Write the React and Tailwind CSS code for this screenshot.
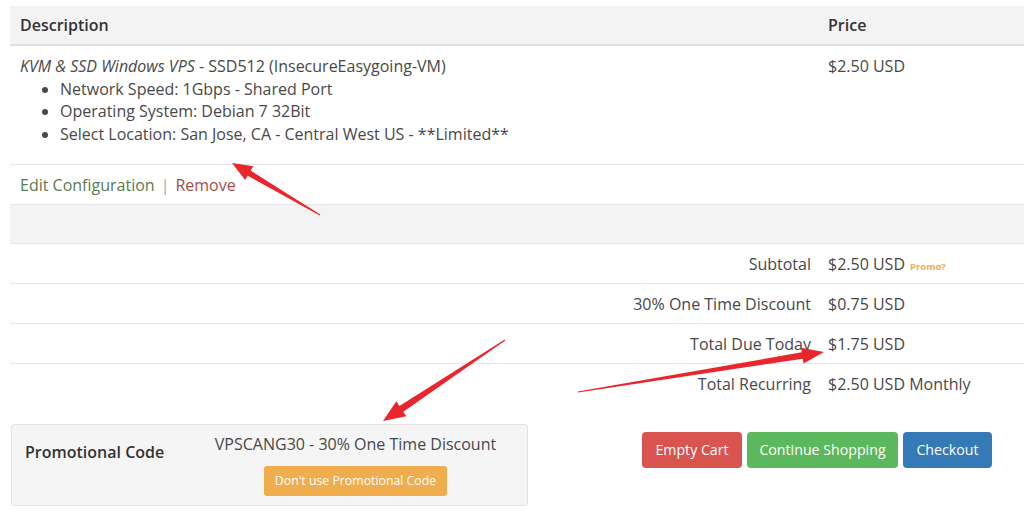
import React from 'react';

const font = { fontFamily: '"Open Sans", "Liberation Sans", sans-serif' };

// arrow polygon: thin tail, thicker near the head, triangular head
function arrowPoints(tail, tip, headLen = 20, headW = 8, shaftW = 3.2) {
  const dx = tip[0] - tail[0];
  const dy = tip[1] - tail[1];
  const len = Math.hypot(dx, dy);
  const ux = dx / len, uy = dy / len;
  const nx = -uy, ny = ux;
  const bx = tip[0] - ux * headLen, by = tip[1] - uy * headLen;
  const pts = [
    [tail[0] + nx * 0.5, tail[1] + ny * 0.5],
    [bx + nx * shaftW, by + ny * shaftW],
    [bx + nx * headW, by + ny * headW],
    tip,
    [bx - nx * headW, by - ny * headW],
    [bx - nx * shaftW, by - ny * shaftW],
    [tail[0] - nx * 0.5, tail[1] - ny * 0.5],
  ];
  return pts.map(p => p.join(',')).join(' ');
}

const totals = [
  { label: 'Subtotal', value: '$2.50 USD', promo: true },
  { label: '30% One Time Discount', value: '$0.75 USD' },
  { label: 'Total Due Today', value: '$1.75 USD' },
  { label: 'Total Recurring', value: '$2.50 USD Monthly' },
];

export default function App() {
  return (
    <div className="relative w-[1024px] h-[520px] overflow-hidden bg-white pt-[6px] pl-[10px] text-[#484848]" style={font}>
      {/* cart table */}
      <div className="w-full">
        <div className="grid grid-cols-[808px_1fr] h-[40px] bg-[#f3f3f3] border-b-2 border-[#e0e0e0] items-center text-[16px] font-semibold text-[#333]">
          <div className="pl-[10px]">Description</div>
          <div className="pl-[10px]">Price</div>
        </div>

        <div className="grid grid-cols-[808px_1fr] h-[118px] text-[16px] leading-[22.5px]">
          <div className="pl-[10px] pt-[9px]">
            <div><em>KVM &amp; SSD Windows VPS</em> - SSD512 (InsecureEasygoing-VM)</div>
            <ul className="list-disc pl-[40px]">
              <li>Network Speed: 1Gbps - Shared Port</li>
              <li>Operating System: Debian 7 32Bit</li>
              <li>Select Location: San Jose, CA - Central West US - **Limited**</li>
            </ul>
          </div>
          <div className="pl-[10px] pt-[9px]">$2.50 USD</div>
        </div>

        <div className="h-[40px] border-t border-[#e6e6e6] flex items-center pl-[10px] text-[16px]">
          <span className="text-[#5b7b53]">Edit Configuration</span>
          <span className="mx-[6px] text-[#aaa]">|</span>
          <span className="text-[#a0504c]">Remove</span>
        </div>

        <div className="h-[39px] border-t border-[#e6e6e6] bg-[#f3f3f3]"></div>

        {totals.map(row => (
          <div key={row.label} className="grid grid-cols-[808px_1fr] h-[40px] border-t border-[#e6e6e6] items-center text-[16px]">
            <div className="text-right pr-[7px]">{row.label}</div>
            <div className="pl-[10px]">
              {row.value}
              {row.promo && <span className="ml-[5px] text-[9.5px] font-bold text-[#f0ad4e]">Promo?</span>}
            </div>
          </div>
        ))}
      </div>

      {/* promo + actions */}
      <div className="flex items-start mt-[21px]">
        <div className="w-[517px] h-[82px] ml-[1px] bg-[#f5f5f5] border border-[#e3e3e3] rounded-[3px] flex">
          <div className="w-[189px] pl-[13px] pt-[15px] text-[16px] font-semibold text-[#333]">Promotional Code</div>
          <div className="flex-1 flex flex-col items-center pt-[8px] pr-[17px]">
            <div className="text-[16px] leading-[22px]">VPSCANG30 - 30% One Time Discount</div>
            <button className="mt-[11px] h-[30px] px-[11px] rounded-[3px] bg-[#f0ad4e] text-white text-[12.3px]">Don't use Promotional Code</button>
          </div>
        </div>
        <div className="flex gap-[5px] ml-[114px] mt-[8px]">
          <button className="h-[36px] w-[100px] rounded-[4px] bg-[#d9534f] text-white text-[14.2px]">Empty Cart</button>
          <button className="h-[36px] w-[151px] rounded-[4px] bg-[#5cb85c] text-white text-[14.2px]">Continue Shopping</button>
          <button className="h-[36px] w-[89px] rounded-[4px] bg-[#337ab7] text-white text-[14.2px]">Checkout</button>
        </div>
      </div>

      {/* red annotation arrows */}
      <svg className="absolute inset-0 pointer-events-none" width="1024" height="520">
        <polygon points={arrowPoints([320, 215], [232, 163], 20, 8, 3)} fill="#e8262b" />
        <polygon points={arrowPoints([505, 340], [383, 421], 22, 9, 3.5)} fill="#e8262b" />
        <polygon points={arrowPoints([578, 392], [824, 352], 22, 8, 3.2)} fill="#e8262b" />
      </svg>
    </div>
  );
}
